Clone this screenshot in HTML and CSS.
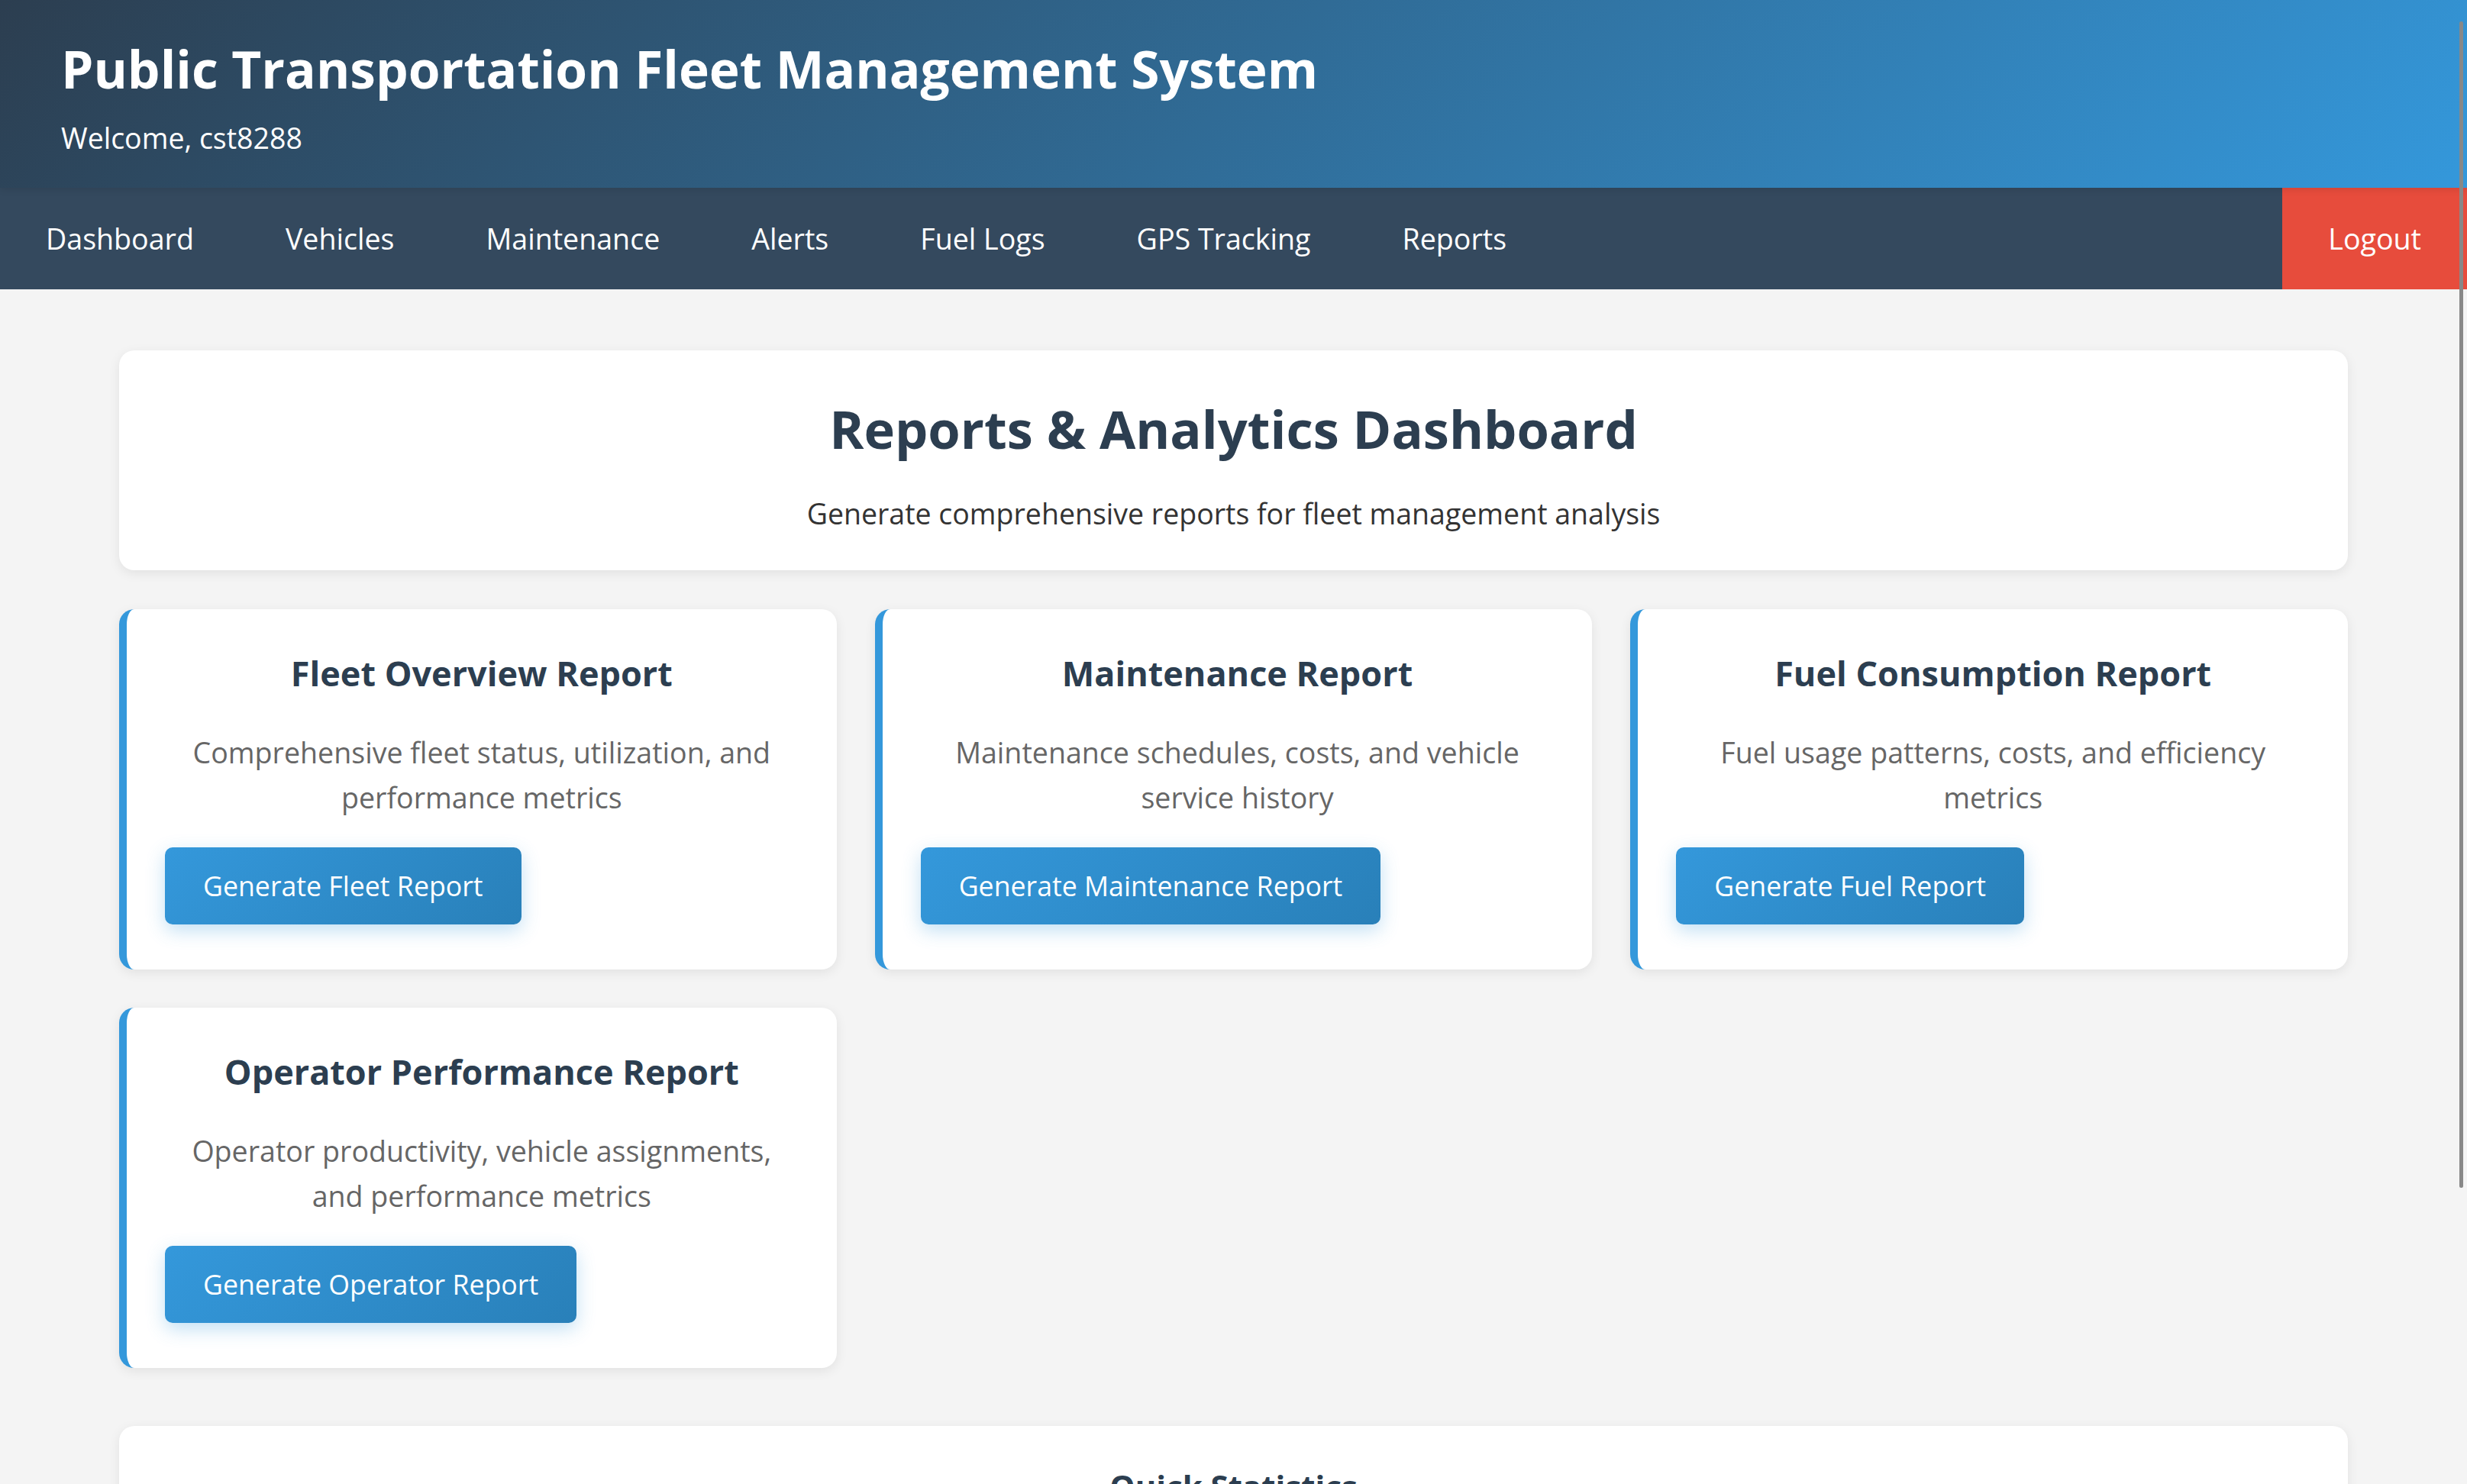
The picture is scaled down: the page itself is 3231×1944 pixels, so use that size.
FILE: index.html
```html
<!DOCTYPE html>
<html lang="en">
<head>
<meta charset="utf-8">
<title>Reports - Public Transportation Fleet Management System</title>
<link rel="stylesheet" href="styles.css">
</head>
<body>
<header class="site-header">
  <h1 class="site-title">Public Transportation Fleet Management System</h1>
  <p class="welcome">Welcome, cst8288</p>
</header>
<nav class="main-nav">
  <a href="#" class="nav-link">Dashboard</a>
  <a href="#" class="nav-link">Vehicles</a>
  <a href="#" class="nav-link">Maintenance</a>
  <a href="#" class="nav-link">Alerts</a>
  <a href="#" class="nav-link">Fuel Logs</a>
  <a href="#" class="nav-link">GPS Tracking</a>
  <a href="#" class="nav-link">Reports</a>
  <a href="#" class="nav-link nav-logout">Logout</a>
</nav>
<main class="container">
  <section class="page-intro">
    <h2 class="page-title">Reports &amp; Analytics Dashboard</h2>
    <p class="page-subtitle">Generate comprehensive reports for fleet management analysis</p>
  </section>

  <section class="report-grid">
    <article class="report-card">
      <h3 class="report-title">Fleet Overview Report</h3>
      <p class="report-desc">Comprehensive fleet status, utilization, and performance metrics</p>
      <button class="report-btn" type="button">Generate Fleet Report</button>
    </article>
    <article class="report-card">
      <h3 class="report-title">Maintenance Report</h3>
      <p class="report-desc">Maintenance schedules, costs, and vehicle service history</p>
      <button class="report-btn" type="button">Generate Maintenance Report</button>
    </article>
    <article class="report-card">
      <h3 class="report-title">Fuel Consumption Report</h3>
      <p class="report-desc">Fuel usage patterns, costs, and efficiency metrics</p>
      <button class="report-btn" type="button">Generate Fuel Report</button>
    </article>
    <article class="report-card">
      <h3 class="report-title">Operator Performance Report</h3>
      <p class="report-desc">Operator productivity, vehicle assignments, and performance metrics</p>
      <button class="report-btn" type="button">Generate Operator Report</button>
    </article>
  </section>

  <section class="stats-panel">
    <h2 class="stats-title">Quick Statistics</h2>
    <div class="stats-grid">
      <div class="stat-box"><span class="stat-value">0</span><span class="stat-label">Total Vehicles</span></div>
      <div class="stat-box"><span class="stat-value">0</span><span class="stat-label">Active Alerts</span></div>
      <div class="stat-box"><span class="stat-value">0</span><span class="stat-label">Pending Maintenance</span></div>
      <div class="stat-box"><span class="stat-value">0</span><span class="stat-label">Fuel Logs</span></div>
    </div>
  </section>
</main>
<div class="scroll-thumb"></div>
</body>
</html>
```

FILE: styles.css
```css
* {
  box-sizing: border-box;
}

html {
  scrollbar-width: none;
}

html::-webkit-scrollbar {
  display: none;
}

body {
  margin: 0;
  background: #f4f4f4;
  font-family: "Open Sans", "Noto Sans", sans-serif;
  color: #333;
}

/* Header */
.site-header {
  position: relative;
  z-index: 1;
  background: linear-gradient(135deg, #2c3e50 0%, #3498db 100%);
  color: #fff;
  padding: 50px 80px 40px;
  box-shadow: 0 2px 10px rgba(0, 0, 0, 0.1);
}

.site-title {
  margin: 0 0 26px;
  font-size: 67.6px;
  line-height: 80px;
  font-weight: 700;
}

.welcome {
  margin: 0;
  font-size: 37.5px;
  line-height: 50px;
}

/* Navigation */
.main-nav {
  display: flex;
  height: 133px;
  background: #34495e;
}

.nav-link {
  padding: 0 60px;
  color: #fff;
  text-decoration: none;
  font-size: 37.6px;
  line-height: 133px;
}

.nav-logout {
  margin-left: auto;
  background: #e74c3c;
}

/* Main */
.container {
  max-width: 2919px;
  margin: 80px auto 0;
  padding-bottom: 80px;
}

.page-intro {
  background: #fff;
  border-radius: 20px;
  box-shadow: 0 4px 15px rgba(0, 0, 0, 0.08);
  text-align: center;
  padding: 63px 40px 49px;
  margin-bottom: 51px;
}

.page-title {
  margin: 0 0 46px;
  font-size: 68.6px;
  line-height: 80px;
  font-weight: 700;
  color: #2c3e50;
}

.page-subtitle {
  margin: 0;
  font-size: 37.5px;
  line-height: 50px;
  color: #333;
}

.report-grid {
  display: grid;
  grid-template-columns: repeat(3, 1fr);
  gap: 50px;
  margin-bottom: 76px;
}

.report-card {
  background: #fff;
  border-left: 10px solid #3498db;
  border-radius: 20px;
  box-shadow: 0 4px 15px rgba(0, 0, 0, 0.08);
  padding: 54px 50px 59px;
}

.report-title {
  margin: 0 0 44px;
  text-align: center;
  font-size: 45px;
  line-height: 60px;
  font-weight: 700;
  color: #2c3e50;
}

.report-desc {
  margin: 0 0 36px;
  padding: 0 17px;
  text-align: center;
  font-size: 37.6px;
  line-height: 59px;
  color: #666;
}

.report-btn {
  display: inline-block;
  border: 0;
  border-radius: 10px;
  padding: 26px 50px;
  font-family: inherit;
  font-size: 35.7px;
  line-height: 49px;
  color: #fff;
  background: linear-gradient(135deg, #3498db 0%, #2980b9 100%);
  box-shadow: 0 8px 25px rgba(52, 152, 219, 0.3);
  cursor: pointer;
}

.stats-panel {
  background: #fff;
  border-radius: 20px;
  box-shadow: 0 4px 15px rgba(0, 0, 0, 0.08);
  padding: 54px 50px;
}

.stats-title {
  margin: 0 0 40px;
  text-align: center;
  font-size: 42px;
  line-height: 49px;
  font-weight: 700;
  color: #2c3e50;
}

.stats-grid {
  display: grid;
  grid-template-columns: repeat(4, 1fr);
  gap: 40px;
}

.stat-box {
  display: flex;
  flex-direction: column;
  align-items: center;
  padding: 40px;
  border-radius: 16px;
  background: #f8f9fa;
}

.stat-value {
  font-size: 64px;
  font-weight: 700;
  color: #3498db;
}

.stat-label {
  font-size: 32px;
  color: #666;
}

.scroll-thumb {
  position: fixed;
  top: 28px;
  right: 5px;
  width: 5px;
  height: 1528px;
  border-radius: 3px;
  background: #888;
  z-index: 10;
}
```
